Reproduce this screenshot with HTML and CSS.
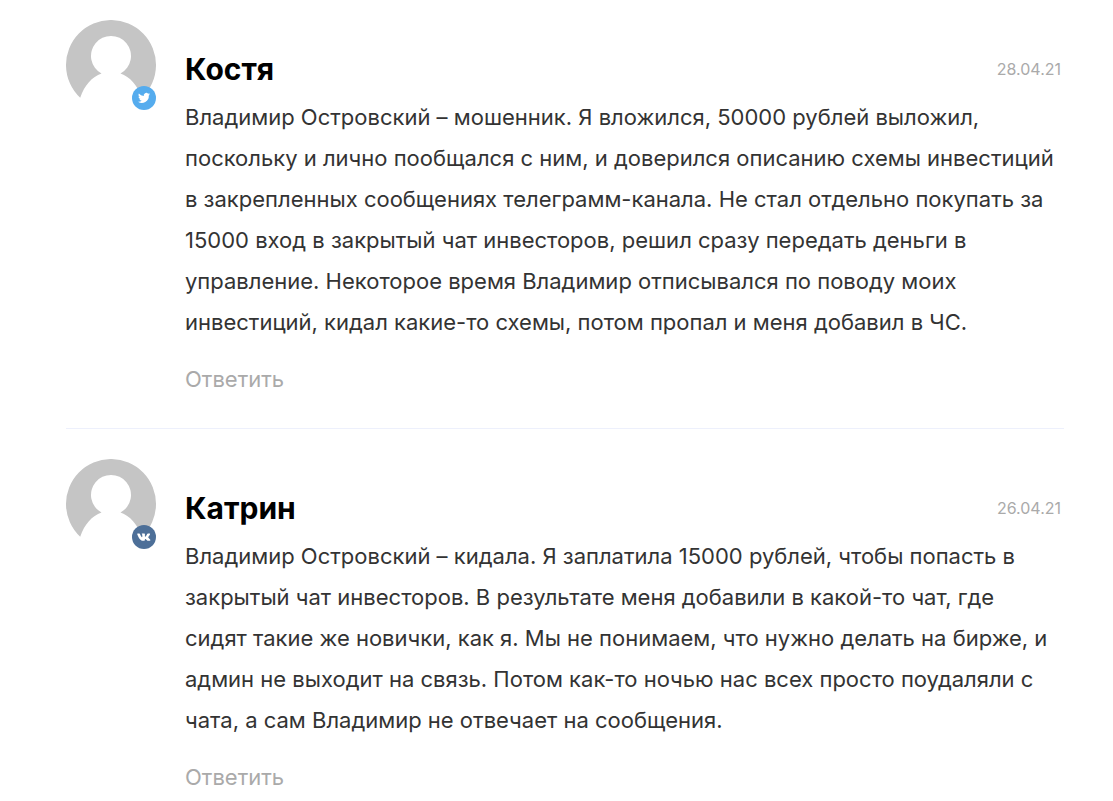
FILE: index.html
```
<!DOCTYPE html>
<html lang="ru">
<head>
	<meta charset="UTF-8">
	<title>Отзывы</title>
	<link rel="stylesheet" href="styles.css">
</head>
<body>
	<ul class="comments">
		<li class="comment">
			<div class="avatar">
				<svg class="avatar-pic" viewBox="0 0 90 90">
					<path fill="#c5c5c5" d="M14.200 77.800A45 45 0 1 1 75.800 77.800C71.500 65 64 57 54.500 53.500A20 20 0 1 0 35.500 53.500C26 57 18.500 65 14.200 77.800Z"/>
				</svg>
				<svg class="badge" viewBox="0 0 24 24">
					<circle cx="12" cy="12" r="12" fill="#55acee"/>
					<path fill="#fff" d="M18 8.200a5 5 0 0 1-1.400.4 2.500 2.500 0 0 0 1.100-1.400 5 5 0 0 1-1.600.6 2.500 2.500 0 0 0-4.300 2.300A7 7 0 0 1 6.800 7.500a2.500 2.500 0 0 0 .8 3.300 2.400 2.400 0 0 1-1.100-.3 2.500 2.500 0 0 0 2 2.500 2.500 2.500 0 0 1-1.100 0 2.500 2.500 0 0 0 2.300 1.700A5 5 0 0 1 6 15.800a7 7 0 0 0 10.800-6.300A5 5 0 0 0 18 8.200Z"/>
				</svg>
			</div>
			<div class="content">
				<div class="head">
					<h3 class="name">Костя</h3>
					<time class="date" datetime="2021-04-28">28.04.21</time>
				</div>
				<p class="text">Владимир Островский – мошенник. Я вложился, 50000 рублей выложил,<br>
				поскольку и лично пообщался с ним, и доверился описанию схемы инвестиций<br>
				в закрепленных сообщениях телеграмм-канала. Не стал отдельно покупать за<br>
				15000 вход в закрытый чат инвесторов, решил сразу передать деньги в<br>
				управление. Некоторое время Владимир отписывался по поводу моих<br>
				инвестиций, кидал какие-то схемы, потом пропал и меня добавил в ЧС.</p>
				<a class="reply" href="#">Ответить</a>
			</div>
		</li>
		<li class="comment">
			<div class="avatar">
				<svg class="avatar-pic" viewBox="0 0 90 90">
					<path fill="#c5c5c5" d="M14.200 77.800A45 45 0 1 1 75.800 77.800C71.500 65 64 57 54.500 53.500A20 20 0 1 0 35.500 53.500C26 57 18.500 65 14.200 77.800Z"/>
				</svg>
				<svg class="badge" viewBox="0 0 24 24">
					<circle cx="12" cy="12" r="12" fill="#4d6f98"/>
					<path fill="#fff" d="M11.400 15.800h.9c.4-.1.500-.3.500-.7 0-1.200.6-1.400 1.300-.6.9.9 1.200 1.300 2.100 1.300h1.500c.9 0 .9-.6.4-1.200-.4-.6-1.700-1.700-1.800-2-.2-.3-.1-.5.1-.8.500-.7 1.500-2 1.700-2.800.1-.4 0-.6-.5-.6H16c-.4 0-.6.2-.8.600-.4 1-1.500 2.700-2 2.700-.2 0-.3-.2-.3-.6V9c0-.4-.1-.6-.6-.6h-2.200c-.4 0-.5.3-.3.500.4.500.5.7.5 1.400v1.500c0 .4-.2.500-.4.400-.5-.3-1.500-2-1.900-3.200-.1-.4-.3-.6-.8-.6H5.700c-.4 0-.6.2-.5.600.3 1.300 1.300 3.300 2.500 4.900 1 1.300 2.300 1.900 3.700 1.900Z"/>
				</svg>
			</div>
			<div class="content">
				<div class="head">
					<h3 class="name">Катрин</h3>
					<time class="date" datetime="2021-04-26">26.04.21</time>
				</div>
				<p class="text">Владимир Островский – кидала. Я заплатила 15000 рублей, чтобы попасть в<br>
				закрытый чат инвесторов. В результате меня добавили в какой-то чат, где<br>
				сидят такие же новички, как я. Мы не понимаем, что нужно делать на бирже, и<br>
				админ не выходит на связь. Потом как-то ночью нас всех просто поудаляли с<br>
				чата, а сам Владимир не отвечает на сообщения.</p>
				<a class="reply" href="#">Ответить</a>
			</div>
		</li>
	</ul>
</body>
</html>
```
FILE: styles.css
```
*{
	margin: 0;
	padding: 0;
	box-sizing: border-box;
}
body{
	background: #fff;
	color: #333;
	font-family: Inter, "Open Sans", sans-serif;
}
a{
	text-decoration: none;
}
li{
	list-style: none;
}
.comments{
	padding: 20px 49px 0 66px;
}
.comment{
	display: flex;
	gap: 29px;
	margin-bottom: 30px;
	padding-bottom: 34px;
	border-bottom: 1px solid #edf0fc;
}
.comment:last-child{
	margin-bottom: 0;
	padding-bottom: 0;
	border-bottom: 0;
}
.avatar{
	position: relative;
	flex: none;
	width: 90px;
	height: 90px;
}
.avatar-pic{
	display: block;
	width: 100%;
	height: 100%;
}
.badge{
	position: absolute;
	right: 0;
	bottom: 0;
	width: 24px;
	height: 24px;
}
.content{
	flex: 1;
	min-width: 0;
}
.head{
	display: flex;
	justify-content: space-between;
	align-items: center;
	padding: 30px 3px 9px 0;
}
.name{
	color: #000;
	font-size: 30px;
	line-height: 38px;
}
.date{
	color: #aaa;
	font-size: 16px;
}
.text{
	font-size: 22px;
	line-height: 41px;
}
.reply{
	display: inline-block;
	margin-top: 21px;
	color: #aaa;
	font-size: 22px;
	line-height: 30px;
}
```
